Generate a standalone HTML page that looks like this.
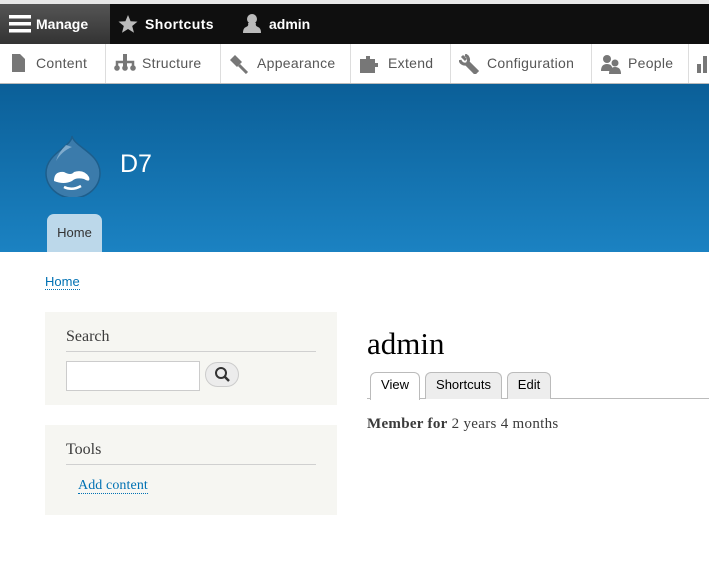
<!DOCTYPE html>
<html><head><meta charset="utf-8"><style>
*{margin:0;padding:0;box-sizing:border-box}
body{width:709px;height:574px;overflow:hidden;background:#fff;font-family:"Liberation Sans",sans-serif;position:relative}
.strip{position:absolute;left:0;top:0;width:709px;height:4px;background:#e8e8e8}
.bar{position:absolute;left:0;top:4px;width:709px;height:40px;background:#0f0f0f;color:#fff;font-weight:bold;font-size:14px}
.bar .it{position:absolute;top:0;height:40px;line-height:40px}
.manage{left:0;width:110px;background:linear-gradient(#555,#333)}
.tray{position:absolute;left:0;top:44px;width:709px;height:40px;background:#fff;border-bottom:1px solid #bbb;font-size:14px;color:#565656;letter-spacing:.3px}
.tray .t{position:absolute;top:0;height:39px;line-height:39px;border-right:1px solid #ddd}
.tray svg{position:absolute;top:10px}
.hdr{position:absolute;left:0;top:84px;width:709px;height:168px;background:linear-gradient(#0b5f98,#1b82c2)}
.site{position:absolute;left:120px;top:150px;color:#fff;font-size:25px}
.home{position:absolute;left:47px;top:214px;width:55px;height:38px;background:#bcd8ea;border-radius:7px 7px 0 0;color:#333;font-size:13px;text-align:center;line-height:37px}
.bc{position:absolute;left:45px;top:275px;font-size:13px;color:#0071b3;border-bottom:1px dotted #0071b3;line-height:14px}
.blk{position:absolute;left:45px;width:292px;background:#f6f6f2}
.blk h2{position:absolute;left:21px;width:250px;font-family:"Liberation Serif",serif;font-weight:normal;font-size:16px;color:#3b3b3b;border-bottom:1px solid #d0d0d0;padding-bottom:5px}
h1{position:absolute;left:367px;top:326px;font-family:"Liberation Serif",serif;font-weight:normal;font-size:31px;color:#000}
.tabs{position:absolute;left:367px;top:398px;width:342px;border-top:1px solid #bbb}
.tab{position:absolute;top:372px;height:27px;border:1px solid #bbb;border-bottom:none;border-radius:6px 6px 0 0;background:#ededed;font-size:13px;line-height:23px;text-align:center;color:#000}
.mem{position:absolute;left:367px;top:416px;font-family:"Liberation Serif",serif;font-size:15px;color:#3b3b3b;letter-spacing:.3px}
</style></head><body>
<div class="strip"></div>
<div class="bar">
 <div class="it manage"><svg width="22" height="18" style="position:absolute;left:9px;top:11px"><rect y="0" width="22" height="3.5" fill="#fff"/><rect y="7" width="22" height="3.5" fill="#fff"/><rect y="14" width="22" height="3.5" fill="#fff"/></svg><span style="position:absolute;left:36px">Manage</span></div>
 <div class="it" style="left:118px"><svg width="20" height="20" style="position:absolute;left:0;top:10px"><polygon points="10,1 12.6,7.3 19.5,7.6 14.2,12 16,18.8 10,15 4,18.8 5.8,12 0.5,7.6 7.4,7.3" fill="#bbb"/></svg><span style="position:absolute;left:27px;white-space:nowrap;letter-spacing:.4px">Shortcuts</span></div>
 <div class="it" style="left:242px"><svg width="20" height="20" style="position:absolute;left:0;top:9px"><circle cx="10" cy="6" r="5" fill="#bbb"/><path d="M6 10 Q7 13 4 14 Q1 15 1 20 H19 Q19 15 16 14 Q13 13 14 10Z" fill="#bbb"/></svg><span style="position:absolute;left:27px">admin</span></div>
</div>
<div class="tray">
 <div class="t" style="left:0;width:106px"><svg width="14" height="18" style="left:12px"><path d="M0 0H8L13 5V18H0Z" fill="#777"/></svg><span style="position:absolute;left:36px">Content</span></div>
 <div class="t" style="left:106px;width:115px"><svg width="22" height="18" style="left:8px"><rect x="9" y="0" width="4" height="6" fill="#777"/><path d="M3 12V8H19V12" stroke="#777" stroke-width="2.5" fill="none"/><rect x="9" y="6" width="4" height="6" fill="#777"/><circle cx="3" cy="14" r="2.8" fill="#777"/><circle cx="11" cy="14" r="2.8" fill="#777"/><circle cx="19" cy="14" r="2.8" fill="#777"/></svg><span style="position:absolute;left:36px">Structure</span></div>
 <div class="t" style="left:221px;width:130px"><svg width="22" height="20" style="left:8px"><path d="M1 6L6 1L13 8L8 13Z" fill="#777"/><path d="M10 11L18 19" stroke="#777" stroke-width="3"/></svg><span style="position:absolute;left:36px">Appearance</span></div>
 <div class="t" style="left:351px;width:100px"><svg width="22" height="20" style="left:8px"><path d="M1 5H7V2H11V5H16V9H19V13H16V19H1Z" fill="#777"/></svg><span style="position:absolute;left:37px">Extend</span></div>
 <div class="t" style="left:451px;width:141px"><svg width="22" height="20" style="left:8px"><path d="M3 2L7 6M6 1A5 5 0 0 1 9 8L18 17L16 19L7 10A5 5 0 0 1 1 6" stroke="#777" stroke-width="3" fill="none"/></svg><span style="position:absolute;left:36px">Configuration</span></div>
 <div class="t" style="left:592px;width:97px"><svg width="22" height="20" style="left:9px"><circle cx="6" cy="5" r="4" fill="#777"/><path d="M0 17Q0 10 6 10Q10 10 11 13V17Z" fill="#777"/><circle cx="14" cy="9" r="3.5" fill="#777"/><path d="M8 20Q8 13 14 13Q20 13 20 20Z" fill="#777"/></svg><span style="position:absolute;left:36px">People</span></div>
 <div class="t" style="left:689px;width:30px;border:none"><svg width="20" height="20" style="left:8px"><rect x="0" y="10" width="4" height="9" fill="#777"/><rect x="6" y="2" width="4" height="17" fill="#777"/></svg></div>
</div>
<div class="hdr"></div>
<svg width="60" height="62" style="position:absolute;left:44px;top:135px" viewBox="0 0 60 62">
 <path d="M28 1C28 12 2 18 2 38A27 25 0 0 0 56 38C56 18 30 12 28 1Z" fill="#3b7bab" stroke="#1d5e8c" stroke-width="1.5"/>
 <path d="M22 10Q14 18 12 26Q18 16 28 12Z" fill="#9cc0dc" opacity=".7"/>
 <path d="M10 46Q10 36 20 37Q27 41 30 37Q40 34 45 42Q47 48 40 44Q32 42 28 46Q20 50 10 46Z" fill="#fff"/>
 <path d="M20 52Q28 56 37 51" stroke="#fff" stroke-width="2.5" fill="none"/>
</svg>
<div class="site">D7</div>
<div class="home">Home</div>
<div class="bc">Home</div>
<div class="blk" style="top:312px;height:93px">
 <h2 style="top:16px">Search</h2>
 <div style="position:absolute;left:21px;top:49px;width:134px;height:30px;background:#fff;border:1px solid #ccc"></div>
 <div style="position:absolute;left:160px;top:50px;width:34px;height:25px;border:1px solid #ccc;border-radius:13px;background:#ececec"><svg width="18" height="18" style="position:absolute;left:8px;top:3px"><circle cx="7" cy="7" r="5" stroke="#333" stroke-width="2" fill="none"/><path d="M10.5 10.5L15 15" stroke="#333" stroke-width="2.5"/></svg></div>
</div>
<div class="blk" style="top:425px;height:90px">
 <h2 style="top:16px">Tools</h2>
 <div style="position:absolute;left:33px;top:53px;font-family:'Liberation Serif',serif;font-size:14px;color:#0071b3;border-bottom:1px dotted #0071b3;line-height:15px;letter-spacing:.1px">Add content</div>
</div>
<h1>admin</h1>
<div class="tabs"></div>
<div class="tab" style="left:370px;width:50px;background:#fff;height:28px">View</div>
<div class="tab" style="left:425px;width:77px">Shortcuts</div>
<div class="tab" style="left:507px;width:44px">Edit</div>
<div class="mem"><b>Member for</b> 2 years 4 months</div>
</body></html>
